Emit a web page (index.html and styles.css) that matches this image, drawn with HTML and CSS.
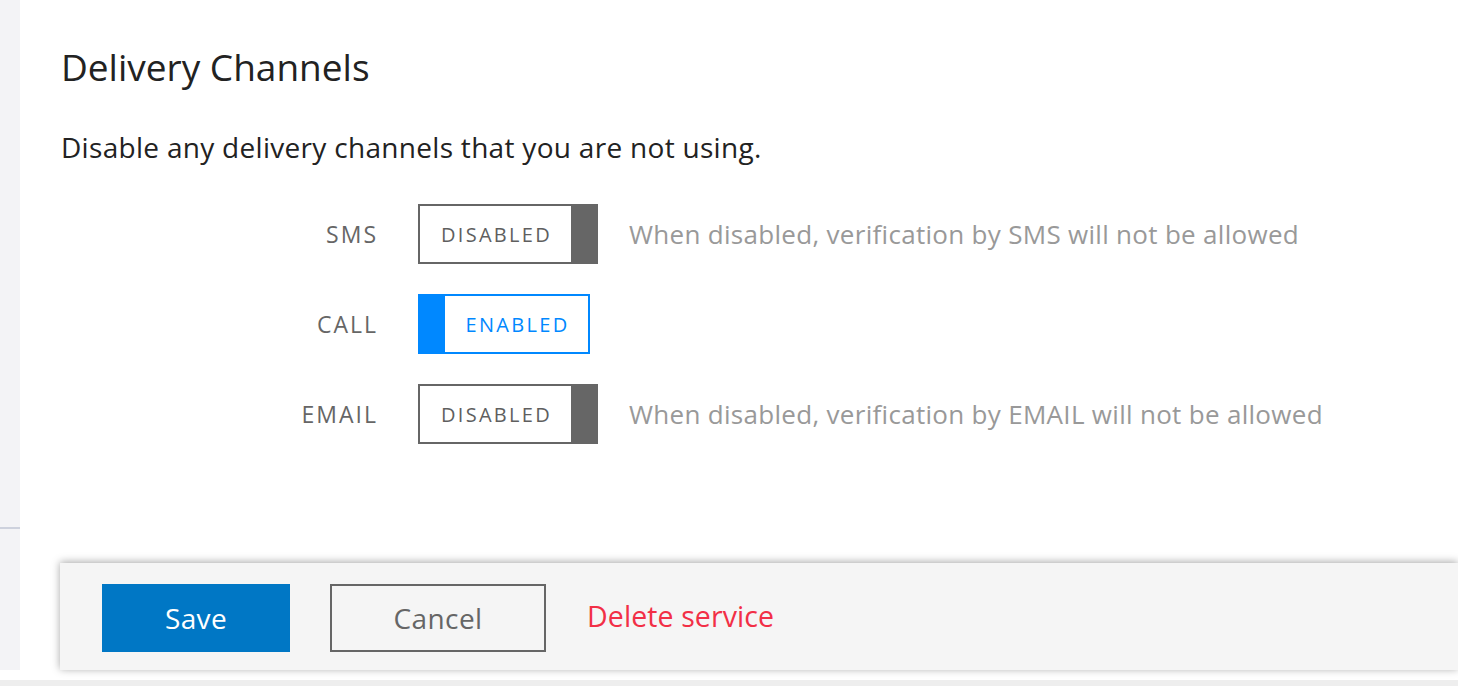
FILE: index.html
```html
<!DOCTYPE html>
<html>
<head>
<meta charset="utf-8">
<link rel="stylesheet" href="styles.css">
</head>
<body>
<div class="page">
  <aside class="sidebar"><div class="sidebar-top"></div></aside>
  <main class="main">
    <section class="content">
      <h2 class="title">Delivery Channels</h2>
      <p class="intro">Disable any delivery channels that you are not using.</p>
      <div class="channels">
        <div class="channel">
          <span class="label">SMS</span>
          <div class="toggle off"><span class="toggle-text">DISABLED</span><span class="knob"></span></div>
          <span class="hint">When disabled, verification by SMS will not be allowed</span>
        </div>
        <div class="channel">
          <span class="label">CALL</span>
          <div class="toggle on"><span class="knob"></span><span class="toggle-text">ENABLED</span></div>
        </div>
        <div class="channel">
          <span class="label">EMAIL</span>
          <div class="toggle off"><span class="toggle-text">DISABLED</span><span class="knob"></span></div>
          <span class="hint">When disabled, verification by EMAIL will not be allowed</span>
        </div>
      </div>
    </section>
    <footer class="actions">
      <button class="btn btn-primary">Save</button>
      <button class="btn btn-secondary">Cancel</button>
      <a class="link-danger">Delete service</a>
    </footer>
  </main>
</div>
<div class="bottom-bar"></div>
</body>
</html>
```

FILE: styles.css
```css
html, body {
  margin: 0;
  padding: 0;
  background: #ffffff;
  font-family: "Open Sans", Lato, sans-serif;
  overflow: hidden;
}
.page {
  display: flex;
  height: 670px;
}
.sidebar {
  width: 20px;
  flex: none;
  background: #f3f3f6;
}
.sidebar-top {
  height: 527px;
  border-bottom: 2px solid #cdd1dd;
}
.main {
  flex: 1;
  display: flex;
  flex-direction: column;
  min-width: 0;
}
.content {
  padding-left: 41px;
  flex: 1;
}
.title {
  margin: 44px 0 0 0;
  font-size: 37px;
  line-height: 46px;
  font-weight: 400;
  color: #222222;
}
.intro {
  margin: 40px 0 0 0;
  font-size: 28px;
  line-height: 34px;
  letter-spacing: 0.3px;
  color: #222222;
}
.channels {
  margin-top: 40px;
  display: flex;
  flex-direction: column;
  gap: 30px;
}
.channel {
  display: flex;
  align-items: center;
  height: 60px;
}
.label {
  width: 317px;
  flex: none;
  text-align: right;
  font-size: 23px;
  letter-spacing: 2px;
  color: #666666;
  margin-right: 40px;
}
.toggle {
  box-sizing: border-box;
  height: 60px;
  display: flex;
  align-items: stretch;
  border: 2px solid #666666;
  flex: none;
}
.toggle.off {
  width: 180px;
}
.toggle.on {
  width: 172px;
  border-color: #0088ff;
}
.toggle-text {
  flex: 1;
  display: flex;
  align-items: center;
  justify-content: center;
  font-size: 20px;
  font-weight: 500;
  letter-spacing: 2.3px;
  color: #5f5f5f;
  padding-left: 2px;
}
.toggle.on .toggle-text {
  color: #0088ff;
}
.knob {
  width: 25px;
  background: #666666;
}
.toggle.on .knob {
  background: #0088ff;
}
.hint {
  margin-left: 31px;
  font-size: 26px;
  letter-spacing: 0.3px;
  color: #999999;
  white-space: nowrap;
}
.actions {
  margin-left: 40px;
  height: 107px;
  box-sizing: border-box;
  background: #f5f5f5;
  box-shadow: 0 -1px 8px rgba(0, 0, 0, 0.35);
  display: flex;
  align-items: flex-start;
  padding: 21px 0 0 42px;
}
.btn {
  box-sizing: border-box;
  height: 68px;
  font-family: "Open Sans", Lato, sans-serif;
  font-size: 28px;
  letter-spacing: 0.4px;
  cursor: pointer;
}
.btn-primary {
  width: 188px;
  background: #0077c5;
  border: none;
  color: #ffffff;
}
.btn-secondary {
  width: 216px;
  margin-left: 40px;
  background: transparent;
  border: 2px solid #666666;
  color: #666666;
}
.link-danger {
  margin-left: 41px;
  height: 64px;
  line-height: 64px;
  font-size: 28.5px;
  letter-spacing: 0.1px;
  color: #f22f46;
}
.bottom-bar {
  margin-top: 10px;
  height: 16px;
  background: #eeeeee;
}
```
